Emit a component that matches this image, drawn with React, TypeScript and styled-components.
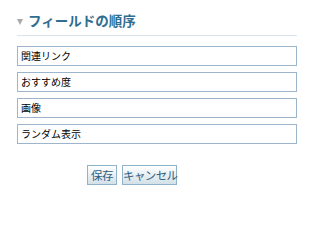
import React from 'react';
import styled, { createGlobalStyle } from 'styled-components';

const GlobalStyle = createGlobalStyle`
	body {
		margin: 0;
		background: #fff;
		font-family: "Noto Sans CJK JP", "Noto Sans", sans-serif;
	}
`;

const Page = styled.div`
	width: 314px;
	padding: 10px 17px 0;
	box-sizing: border-box;
`;

const Header = styled.div`
	display: flex;
	align-items: center;
	height: 21px;
	padding-bottom: 4px;
	border-bottom: 1px solid #d9e5ee;
`;

const Arrow = styled.span`
	width: 0;
	height: 0;
	margin: 3px 5px 0 0;
	border-left: 3px solid transparent;
	border-right: 3px solid transparent;
	border-top: 6px solid #a9a9a9;
`;

const Title = styled.h2`
	margin: 0;
	font-size: 13.5px;
	font-weight: bold;
	line-height: 21px;
	color: #2f6e90;
`;

const FieldList = styled.div`
	display: flex;
	flex-direction: column;
	gap: 6px;
	margin-top: 10px;
`;

const Field = styled.div`
	height: 20px;
	box-sizing: border-box;
	padding: 0 3px;
	border: 1px solid #9db5cc;
	font-size: 10px;
	line-height: 18px;
	color: #000;
`;

const ButtonRow = styled.div`
	display: flex;
	gap: 5px;
	margin-top: 21px;
	padding-left: 70px;
`;

const Button = styled.button<{ $w: number }>`
	width: ${(p) => p.$w}px;
	height: 20px;
	padding: 0;
	border: 1px solid #8fb3cb;
	background: linear-gradient(#ffffff, #d3e0e8);
	color: #2c6082;
	font-family: inherit;
	font-size: 11.5px;
	line-height: 18px;
	letter-spacing: -0.6px;
	white-space: nowrap;
`;

const fields = ['関連リンク', 'おすすめ度', '画像', 'ランダム表示'];

function App() {
	return (
		<Page>
			<GlobalStyle />
			<Header>
				<Arrow />
				<Title>フィールドの順序</Title>
			</Header>
			<FieldList>
				{fields.map((f) => (
					<Field key={f}>{f}</Field>
				))}
			</FieldList>
			<ButtonRow>
				<Button $w={30}>保存</Button>
				<Button $w={55}>キャンセル</Button>
			</ButtonRow>
		</Page>
	);
}

export default App;
